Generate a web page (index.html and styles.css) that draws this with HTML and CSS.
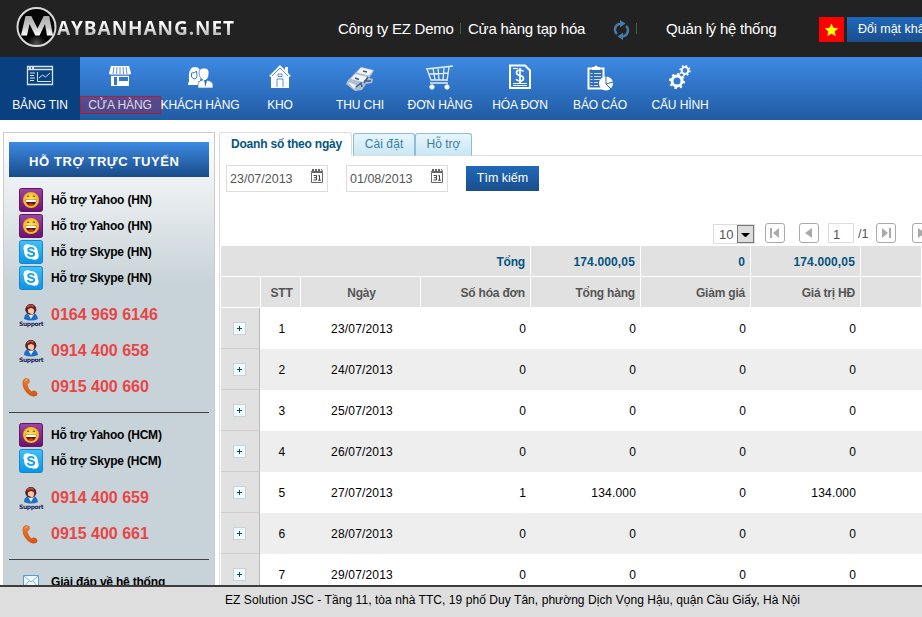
FILE: index.html
```html
<!DOCTYPE html>
<html lang="vi">
<head>
<meta charset="utf-8">
<title>Maybanhang.net</title>
<link rel="stylesheet" href="styles.css">
</head>
<body>
<svg class="defs" width="0" height="0" aria-hidden="true">
  <defs>
    <linearGradient id="gPurple" x1="0" y1="0" x2="0" y2="1"><stop offset="0" stop-color="#9c479f"/><stop offset="1" stop-color="#6c106f"/></linearGradient>
    <linearGradient id="gSky" x1="0" y1="0" x2="0" y2="1"><stop offset="0" stop-color="#43c0f7"/><stop offset="1" stop-color="#0b94e6"/></linearGradient>
    <radialGradient id="gFace"><stop offset="0" stop-color="#fff27a"/><stop offset="1" stop-color="#f5b414"/></radialGradient>
    <linearGradient id="gMetal" x1="0" y1="0" x2="0" y2="1"><stop offset="0" stop-color="#aaa"/><stop offset=".6" stop-color="#ccc"/><stop offset="1" stop-color="#fff"/></linearGradient>
    <radialGradient id="gDisc" cx=".5" cy=".95"><stop offset="0" stop-color="#555"/><stop offset=".5" stop-color="#050505"/></radialGradient>
    <linearGradient id="gPhone" x1="0" y1="0" x2="0" y2="1"><stop offset="0" stop-color="#f07d2c"/><stop offset="1" stop-color="#d9540f"/></linearGradient>
  </defs>
  <symbol id="yahoo" viewBox="0 0 24 24">
    <rect x=".5" y=".5" width="23" height="23" rx="2" fill="url(#gPurple)" stroke="#651269"/>
    <circle cx="12" cy="12" r="8" fill="url(#gFace)"/>
    <path d="M8 8.500q1-1 2.200 0M13.800 8.500q1-1 2.200 0" fill="none" stroke="#553300" stroke-width="1"/>
    <path d="M6.500 11.800h11q-.5 6-5.500 6t-5.500-6z" fill="#5a1608"/>
    <path d="M6.800 12h10.400l-.4 2H7.200z" fill="#fff"/>
    <path d="M9 16.300q3-2 6 0q-3 2-6 0z" fill="#e33422"/>
  </symbol>
  <symbol id="skype" viewBox="0 0 24 24">
    <rect x=".5" y=".5" width="23" height="23" rx="2" fill="url(#gSky)" stroke="#1487cd"/>
    <circle cx="12" cy="12" r="6.900" fill="#fff"/><circle cx="8.600" cy="8.400" r="4.100" fill="#fff"/><circle cx="15.500" cy="15.700" r="4.100" fill="#fff"/>
    <path d="M15 9.700q-.6-1.800-3-1.800-2.800 0-2.800 1.900 0 1.500 2.800 2 3.200.6 3.200 2.200 0 2.100-3.100 2.100-2.700 0-3.300-2" fill="none" stroke="#16a1ea" stroke-width="1.900"/>
  </symbol>
  <symbol id="support" viewBox="0 0 24 17">
    <path d="M5 15q0-6 6.500-6.500T19 15q-3.500 1.500-7 1.500T5 15z" fill="#1c6fc4"/>
    <path d="M9 10l3 5 3-5z" fill="#d9f1ff"/>
    <circle cx="11.800" cy="5.500" r="5.400" fill="#7c2118"/>
    <path d="M9 5.500q3-3 6 0v1.500q0 3.500-3 3.500T9 7z" fill="#f5c9a6"/>
    <path d="M7 7V5q1-4.500 5-4.500T16.700 5v2M7.500 7.500q1 2.500 4 2.300" fill="none" stroke="#2b2a50" stroke-width="1"/>
    <path d="M8 3q4-3 6.500-.5" fill="none" stroke="#c94a30" stroke-width="1.600"/>
  </symbol>
  <symbol id="phone" viewBox="0 0 17 19">
    <path d="M1 3Q2 .3 5 .6 7.500 1 7.500 3 7 5.500 5 6.500 6 11 9.500 14 11.500 12 14 13.500q2 2 .5 4-3.500 2-7.500-1Q0 11 1 3z" fill="url(#gPhone)" stroke="#b8480e" stroke-width=".5"/>
    <path d="M3 3.500q.8-2 2.600-1.700" fill="none" stroke="#f9b27c" stroke-width="1"/>
  </symbol>
  <symbol id="cal" viewBox="0 0 12 15">
    <path d="M.5 4.500h11v10H.5zM0 3.500h12M1 1l2 2M4 1l2 2M7 1l2 2M10 1l1.500 2M1 3l2-2M4 3l2-2M7 3l2-2" fill="none" stroke="#666"/>
    <path d="M2.500 7.500h3v4.500h-3M3 9.700h2.500M7.200 8l1.300-.7V12M7 12.200h3" fill="none" stroke="#444"/>
  </symbol>
  <symbol id="prev" viewBox="0 0 20 20"><path d="M13 5v10l-7-5z" fill="#aaa"/></symbol>
  <symbol id="next" viewBox="0 0 20 20"><path d="M6 5v10l7-5z" fill="#aaa"/></symbol>
  <symbol id="first" viewBox="0 0 20 20"><path d="M5 5h2v10H5zM14 5v10l-6-5z" fill="#aaa"/></symbol>
  <symbol id="last" viewBox="0 0 20 20"><path d="M13 5h2v10h-2zM6 5v10l6-5z" fill="#aaa"/></symbol>
</svg>

<header class="top">
  <div class="logo">
    <svg width="42" height="42" viewBox="0 0 42 42">
      <circle cx="21.500" cy="21" r="19" fill="url(#gDisc)" stroke="#d8d8d8" stroke-width="2"/>
      <path d="M6 29.500L10.500 10h5.800l6.200 12.500L28.700 10h5.500L38 29.500h-6L30 18l-5.500 11.500h-4.200L14.500 18 12 29.500z" fill="url(#gMetal)"/>
    </svg>
    <span class="logo-text">AYBANHANG.NET</span>
  </div>
  <span class="company">Công ty EZ Demo</span><i class="sep"></i>
  <span class="store">Cửa hàng tạp hóa</span>
  <svg class="sync" width="17" height="20" viewBox="0 0 17 20"><g fill="none" stroke="#447ba8" stroke-width="2.500"><path d="M8.500 3.500Q2 4 2 10q0 2.500 2 4"/><path d="M8.500 16.500Q15 16 15 10q0-2.500-2-4"/></g><path d="M7 0l5.500 3.500L7 7.500zM10 12.500V20l-5.500-3.500z" fill="#447ba8"/></svg>
  <i class="sep sep-sync"></i>
  <span class="admin">Quản lý hệ thống</span>
  <span class="flag"><svg width="15" height="14" viewBox="0 0 15 14"><path d="M7.500.5l2 4.300 4.700.5-3.500 3.200 1 4.700-4.200-2.400-4.200 2.400 1-4.700L.8 5.300l4.700-.5z" fill="#ff0"/></svg></span>
  <span class="btn password">Đổi mật khẩu</span>
</header>

<nav class="menu">
  <a class="item active"><svg width="28" height="26" viewBox="0 0 28 26" fill="none" stroke="#d7e3ef"><path d="M1.500 2.500h25v18h-25zM1.500 5.500h25M3 4h2M6 4h2" stroke-width="1.300"/><path d="M4 9h5M4 11.500h4M4 14h5M4 16.500h4M11.500 8v9.500H25M13 14l3.500-3 3 2 4.500-4"/></svg><span>BẢNG TIN</span></a>
  <a class="item"><svg width="24" height="26" viewBox="0 0 24 26"><path d="M3 2h18l2 7q0 1.500-1.500 1.500h-19Q1 10.500 1 9zM3 11h18v11H3z" fill="#fff"/><path d="M6 3l-1 7M9 3l-.5 7M12 3v7M15 3l.5 7M18 3l1 7M3 11.500h18" fill="none" stroke="#3577c9" stroke-width=".8"/><path d="M11 13h9v4h-9zM6 13h3v8H6z" fill="#3577c9"/></svg><span class="marked">CỬA HÀNG</span></a>
  <a class="item"><svg width="26" height="26" viewBox="0 0 26 26" fill="#fff"><path d="M2 16Q1 3 8 3q6 0 6 9l-1 5H2zM1 20q0-3 4-4h5l3 3v2H1z"/><path d="M4.500 9q4 0 5-2 1 5 0 7-2.500 2.500-5-1z" fill="#fff" stroke="#377bd0"/><path d="M12 9q0-5 5-5t5 5q0 5-3 7 7 1 7 5v3H11v-3q0-4 5-5-4-2-4-7z" stroke="#377bd0" stroke-width=".7"/><path d="M17 16l1.500 7 1.500-7z" fill="#2f6ebc"/></svg><span>KHÁCH HÀNG</span></a>
  <a class="item"><svg width="24" height="26" viewBox="0 0 24 26"><path d="M12 1L1 12l2 1v11h18V13l2-1-3-3V3h-3v3z" fill="#fff"/><path d="M4 12l8-8 8 8M9 23v-8h6v8M10 10h4v2.500h-4z" fill="none" stroke="#3475c5" stroke-width=".8"/></svg><span>KHO</span></a>
  <a class="item"><svg width="30" height="28" viewBox="0 0 30 28"><path d="M16 3l13 3-2 4-3 4 4 1-1 4-6 1-4 6-7 1-9-7 2-4z" fill="#aebfd2"/><path d="M16 3.500l12 3-4 5-12-3zM10 10l12 3-4 5-12-3zM3 18l8 3-2 4z" fill="#f1f3f5"/><path d="M18 7l4 1M10 14l4 1.500M11 23l5-4 1 4M19 17l7 0M23 13l-4 6" fill="none" stroke="#3e5f85" stroke-width="1.500"/></svg><span>THU CHI</span></a>
  <a class="item"><svg width="28" height="28" viewBox="0 0 28 28" fill="none" stroke="#e7effa"><path d="M0 5l23-2.500 4-.5M23 3l-2 14M1 5l4 11h16M3 10l19-1M7 4l2 12M12 4l1 12M18 3l-1 13M4 19h18" stroke-width="1.300"/><circle cx="6" cy="23" r="2.200" fill="#fff"/><circle cx="21" cy="23" r="2.200" fill="#fff"/></svg><span>ĐƠN HÀNG</span></a>
  <a class="item"><svg width="22" height="26" viewBox="0 0 22 26" fill="none" stroke="#fff"><path d="M1 1.500h15l5 5V24H1z" stroke-width="2"/><path d="M14.500 7.500Q13 6 11 6q-3.500 0-3.500 2.500T11 11.500t3.500 3Q14.500 17 11 17q-2.500 0-4-1.700M11 4v15" stroke-width="1.700"/><path d="M4 19.500h14M4 21.500h14M4 4.500h5"/></svg><span>HÓA ĐƠN</span></a>
  <a class="item"><svg width="28" height="28" viewBox="0 0 28 28"><path d="M2.500 4.500h15v20h-15z" fill="#2f6fbd" stroke="#fff" stroke-width="2"/><path d="M6 3h2q2-3 4 0h2v3H6z" fill="#fff"/><path d="M4.500 9.500h2M8 9.500h7M4.500 12.500h2M8 12.500h7M4.500 15.500h2M8 15.500h6M4.500 18.500h2M8 18.500h4M4.500 21.500h2M8 21.500h4" stroke="#cfe0f4"/><circle cx="20" cy="19.500" r="7" fill="#fff"/><path d="M27 18l-7 2V12M20 20l5 5" fill="none" stroke="#2e6cb8" stroke-width="1"/></svg><span>BÁO CÁO</span></a>
  <a class="item"><svg width="22" height="26" viewBox="0 0 22 26" fill="none" stroke="#fff"><circle cx="8" cy="17" r="5" stroke-width="3"/><circle cx="8" cy="17" r="7" stroke-width="2" stroke-dasharray="2.500 3"/><circle cx="16" cy="6.500" r="3.400" stroke-width="2"/><circle cx="16" cy="6.500" r="4.900" stroke-width="1.500" stroke-dasharray="1.700 2.150"/></svg><span>CẤU HÌNH</span></a>
</nav>

<main class="content">
  <aside class="side">
    <h2>HỖ TRỢ TRỰC TUYẾN</h2>
    <div class="group">
      <p class="chat"><svg width="24" height="24"><use href="#yahoo"/></svg>Hỗ trợ Yahoo (HN)</p>
      <p class="chat"><svg width="24" height="24"><use href="#yahoo"/></svg>Hỗ trợ Yahoo (HN)</p>
      <p class="chat"><svg width="24" height="24"><use href="#skype"/></svg>Hỗ trợ Skype (HN)</p>
      <p class="chat"><svg width="24" height="24"><use href="#skype"/></svg>Hỗ trợ Skype (HN)</p>
      <p class="call"><span class="agent"><svg width="24" height="17"><use href="#support"/></svg><b>Support</b></span>0164 969 6146</p>
      <p class="call"><span class="agent"><svg width="24" height="17"><use href="#support"/></svg><b>Support</b></span>0914 400 658</p>
      <p class="call"><span class="agent"><svg width="17" height="19"><use href="#phone"/></svg></span>0915 400 660</p>
    </div>
    <div class="group second">
      <p class="chat"><svg width="24" height="24"><use href="#yahoo"/></svg>Hỗ trợ Yahoo (HCM)</p>
      <p class="chat"><svg width="24" height="24"><use href="#skype"/></svg>Hỗ trợ Skype (HCM)</p>
      <p class="call"><span class="agent"><svg width="24" height="17"><use href="#support"/></svg><b>Support</b></span>0914 400 659</p>
      <p class="call"><span class="agent"><svg width="17" height="19"><use href="#phone"/></svg></span>0915 400 661</p>
    </div>
    <div class="group second">
      <p class="chat mail"><svg width="24" height="14" viewBox="0 0 24 14"><path d="M4.500.5h15v12h-15z" fill="#eef8fe" stroke="#5a9cc9"/><path d="M5 1l7 6 7-6M5 12l5-6M19 12l-5-6" fill="none" stroke="#7db4d8"/></svg>Giải đáp về hệ thống</p>
    </div>
  </aside>

  <section class="main">
    <div class="tabs">
      <span class="tab on">Doanh số theo ngày</span><span class="tab t2">Cài đặt</span><span class="tab t3">Hỗ trợ</span><span class="rule"></span>
    </div>
    <div class="panel">
      <div class="filter">
        <span class="date">23/07/2013<svg width="12" height="15"><use href="#cal"/></svg></span>
        <span class="date">01/08/2013<svg width="12" height="15"><use href="#cal"/></svg></span>
        <span class="btn search">Tìm kiếm</span>
      </div>
      <div class="pager">
        <span class="select">10<i></i></span>
        <span class="pg p1"><svg width="20" height="20"><use href="#first"/></svg></span>
        <span class="pg p2"><svg width="20" height="20"><use href="#prev"/></svg></span>
        <span class="page">1</span><span class="of">/1</span>
        <span class="pg p3"><svg width="20" height="20"><use href="#last"/></svg></span>
        <span class="pg p4"><svg width="20" height="20"><use href="#next"/></svg></span>
      </div>
      <div class="grid sum"><b class="total">Tổng</b><b>174.000,05</b><b>0</b><b>174.000,05</b><b></b></div>
      <div class="grid head"><b></b><b class="c">STT</b><b class="c">Ngày</b><b>Số hóa đơn</b><b>Tổng hàng</b><b>Giảm giá</b><b>Giá trị HĐ</b><b></b></div>
      <div class="grid row"><span class="exp"><i></i></span><span class="c">1</span><span class="c">23/07/2013</span><span>0</span><span>0</span><span>0</span><span>0</span></div>
      <div class="grid row alt"><span class="exp"><i></i></span><span class="c">2</span><span class="c">24/07/2013</span><span>0</span><span>0</span><span>0</span><span>0</span></div>
      <div class="grid row"><span class="exp"><i></i></span><span class="c">3</span><span class="c">25/07/2013</span><span>0</span><span>0</span><span>0</span><span>0</span></div>
      <div class="grid row alt"><span class="exp"><i></i></span><span class="c">4</span><span class="c">26/07/2013</span><span>0</span><span>0</span><span>0</span><span>0</span></div>
      <div class="grid row"><span class="exp"><i></i></span><span class="c">5</span><span class="c">27/07/2013</span><span>1</span><span>134.000</span><span>0</span><span>134.000</span></div>
      <div class="grid row alt"><span class="exp"><i></i></span><span class="c">6</span><span class="c">28/07/2013</span><span>0</span><span>0</span><span>0</span><span>0</span></div>
      <div class="grid row"><span class="exp"><i></i></span><span class="c">7</span><span class="c">29/07/2013</span><span>0</span><span>0</span><span>0</span><span>0</span></div>
    </div>
  </section>
</main>

<footer class="foot">EZ Solution JSC - Tầng 11, tòa nhà TTC, 19 phố Duy Tân, phường Dịch Vọng Hậu, quận Cầu Giấy, Hà Nội</footer>
</body>
</html>
```
FILE: styles.css
```css
* { box-sizing: border-box; }
body {
  margin: 0;
  width: 922px;
  height: 617px;
  overflow: hidden;
  display: flex;
  flex-direction: column;
  background: #fff;
  font: 12px "Liberation Sans", Arial, sans-serif;
  color: #000;
}
svg { display: block; flex: none; }
p, h2 { margin: 0; }
.defs { position: absolute; }

.top {
  height: 57px;
  flex: none;
  display: flex;
  align-items: center;
  background: #222;
  color: #fff;
  font-size: 15px;
  letter-spacing: -.24px;
  white-space: nowrap;
}
.logo { display: flex; align-items: center; width: 338px; padding-left: 15px; padding-bottom: 3px; flex: none; }
.logo-text {
  font: 700 19px "Open Sans", sans-serif;
  letter-spacing: .95px;
  line-height: 28px;
  padding-top: 2px;
  background: linear-gradient(#fff 40%, #aaa 85%);
  -webkit-background-clip: text;
  background-clip: text;
  color: transparent;
}
.company { width: 122px; flex: none; }
.sep { width: 1px; height: 11px; background: #3f6340; flex: none; }
.store { width: 145px; margin-left: 7px; flex: none; }
.sync { margin: 3px 0 0 0; }
.sep-sync { margin-left: 6px; }
.admin { width: 153px; margin-left: 29px; flex: none; }
.flag { width: 25px; height: 25px; background: #f00; display: flex; align-items: center; justify-content: center; flex: none; margin-top: 2px; }
.btn { background: linear-gradient(#1f68ba, #1a4e8b); color: #fff; height: 25px; line-height: 25px; font-size: 12.500px; letter-spacing: 0; flex: none; }
.password { width: 100px; margin: 2px 0 0 3px; padding-left: 11px; }

.menu { height: 63px; flex: none; display: flex; background: linear-gradient(#3d8ae4, #205ba3); color: #fff; }
.item { width: 80px; height: 63px; display: flex; flex-direction: column; align-items: center; justify-content: space-between; padding: 6px 0 6px; font-size: 12px; letter-spacing: -.1px; white-space: nowrap; }
.item svg { margin-top: 1px; }
.item span { height: 18px; line-height: 18px; }
.active { background: #09407f; }
.item .marked { width: 81px; text-align: center; background: rgba(125, 45, 100, .5); box-shadow: inset 0 0 0 1px #b51d35; color: #ead3e2; }

.content { flex: 1; min-height: 0; display: flex; overflow: hidden; padding: 12px 0 0 3px; }
.side { width: 212px; height: 600px; flex: none; border: 1px solid #ccc; background: linear-gradient(#fff, #c8d3d9 150px); padding: 9px 5px; }
.side h2 { height: 35px; line-height: 40px; padding-left: 20px; background: linear-gradient(#3d8ae4, #194b87); color: #fff; font-size: 13px; letter-spacing: .6px; white-space: nowrap; }
.group { padding: 11px 0 0 10px; }
.chat { display: flex; align-items: center; gap: 8px; height: 24px; margin-bottom: 2px; font-weight: bold; font-size: 12px; letter-spacing: -.2px; }
.call { display: flex; align-items: center; gap: 8px; height: 36px; font-weight: bold; font-size: 16px; color: #e84545; }
.chat + .call { margin-top: 7px; }
.agent { width: 24px; padding-top: 1px; flex: none; }
.agent svg[width="17"] { margin-left: 3px; }
.agent b { display: block; font: bold 6px/6px "DejaVu Sans", sans-serif; letter-spacing: -.4px; color: #25265c; }
.second { margin-top: 7px; border-top: 1px solid #444; padding: 10px 0 0 10px; }

.main { flex: 1; min-width: 0; margin-left: 4px; }
.tabs { display: flex; height: 24px; }
.tab { border: 1px solid #8fbdd2; border-radius: 3px 3px 0 0; text-align: center; line-height: 22px; color: #3f7c9f; background: linear-gradient(#e8f6fd, #c7e7f6); height: 24px; margin-right: 1px; flex: none; white-space: nowrap; border-bottom-color: #ddd; }
.on { width: 133px; border-color: #ddd #ddd #fff; background: #fff; color: #04557f; font-weight: bold; letter-spacing: -.2px; padding-left: 2px; }
.t2 { width: 62px; margin-right: 0; letter-spacing: .1px; }
.t3 { width: 57px; }
.tab:not(.on) { margin-top: 1px; height: 23px; line-height: 20px; }
.rule { flex: 1; border-bottom: 1px solid #ddd; margin-left: -1px; }
.panel { border-left: 1px solid #ddd; height: 500px; padding: 9px 0 0 1px; overflow: hidden; }
.filter { display: flex; gap: 18px; padding-left: 5px; height: 27px; }
.date { width: 102px; height: 27px; border: 1px solid #ddd; display: flex; justify-content: space-between; padding: 2px 4px 0 3px; font-size: 12.500px; line-height: 22px; color: #555; }
.search { width: 73px; margin-top: 1px; text-align: center; }
.pager { display: flex; margin: 31px 0 0 492px; height: 23px; color: #555; font-size: 13px; line-height: 20px; }
.pager > * { flex: none; }
.select { width: 42px; height: 20px; margin-top: 1px; border: 1px solid #ddd; padding-left: 5px; display: flex; justify-content: space-between; line-height: 19px; }
.select i { width: 17px; height: 18px; background: #ddd; border: 1px solid #777; padding: 7px 3px; }
.select i::before { content: ""; display: block; border: 4.500px solid transparent; border-top-color: #000; border-bottom: 0; }
.pg { width: 20px; height: 20px; border: 1px solid #aaa; border-radius: 3px; }
.pg svg { margin: -1px; }
.p1 { margin-left: 10px; }
.p2 { margin-left: 14px; }
.page { width: 26px; height: 20px; border: 1px solid #ddd; margin-left: 9px; padding-left: 4px; line-height: 21px; }
.of { width: 22px; padding-left: 4px; font-size: 12.500px; line-height: 22px; }
.p4 { margin-left: 16px; }

.grid { display: grid; grid-template-columns: 40px 40px 120px 110px 110px 110px 110px 61px; width: 701px; }
.grid > * { text-align: right; }
.grid > .c { text-align: center; padding: 0; }
.sum b, .head b { background: #e1e1e1; height: 30px; line-height: 32px; border-right: 1px solid #fff; padding-right: 5px; color: #04557f; letter-spacing: .15px; }
.sum { margin-bottom: 1px; }
.sum .total { grid-column: span 4; letter-spacing: -.2px; }
.head b { color: #555; letter-spacing: -.2px; }
.grid.head > .c { padding-left: 2px; }
.head { border-bottom: 1px solid #fff; }
.row { height: 41px; grid-template-rows: 41px; line-height: 42px; letter-spacing: .18px; }
.row > span { padding-right: 5px; }
.row > .c { padding-left: 2px; }
.alt { background: #eee; }
.row > .exp { width: 39px; background: #e1e1e1; border-right: 1px solid #bbb; border-bottom: 1px solid #ccc; padding: 14px 0 0 12px; }
.exp i { display: block; width: 13px; height: 13px; border: 1px solid #c2d5df; background: linear-gradient(#134b66, #134b66) center/5px 1px no-repeat, linear-gradient(#134b66, #134b66) center/1px 5px no-repeat, #f3fafd; }

.foot { height: 32px; flex: none; border-top: 2px solid #3c3c3c; background: #dedede; padding-left: 225px; line-height: 26px; letter-spacing: .06px; white-space: nowrap; }
```
